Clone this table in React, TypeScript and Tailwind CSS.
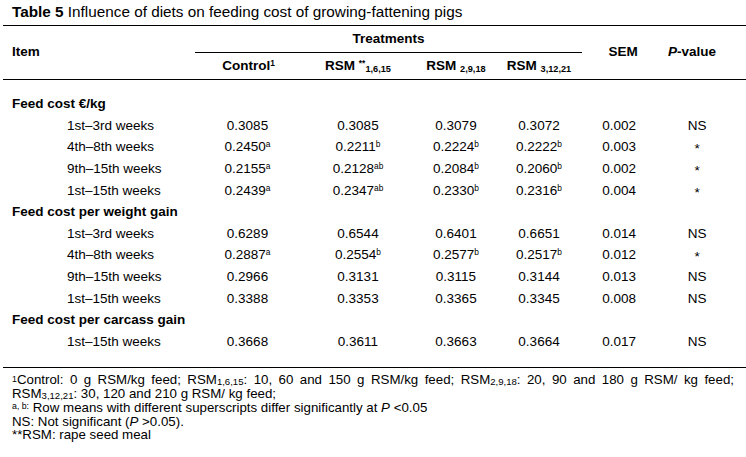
import React from "react";

type Cell = { v: string; s?: string };

type Row =
    | { kind: "group"; label: string }
    | { kind: "data"; label: string; cells: Cell[]; sem: string; p: string };

const c = (v: string, s?: string): Cell => ({ v, s });

const rows: Row[] = [
    { kind: "group", label: "Feed cost €/kg" },
    { kind: "data", label: "1st–3rd weeks", cells: [c("0.3085"), c("0.3085"), c("0.3079"), c("0.3072")], sem: "0.002", p: "NS" },
    { kind: "data", label: "4th–8th weeks", cells: [c("0.2450", "a"), c("0.2211", "b"), c("0.2224", "b"), c("0.2222", "b")], sem: "0.003", p: "*" },
    { kind: "data", label: "9th–15th weeks", cells: [c("0.2155", "a"), c("0.2128", "ab"), c("0.2084", "b"), c("0.2060", "b")], sem: "0.002", p: "*" },
    { kind: "data", label: "1st–15th weeks", cells: [c("0.2439", "a"), c("0.2347", "ab"), c("0.2330", "b"), c("0.2316", "b")], sem: "0.004", p: "*" },
    { kind: "group", label: "Feed cost per weight gain" },
    { kind: "data", label: "1st–3rd weeks", cells: [c("0.6289"), c("0.6544"), c("0.6401"), c("0.6651")], sem: "0.014", p: "NS" },
    { kind: "data", label: "4th–8th weeks", cells: [c("0.2887", "a"), c("0.2554", "b"), c("0.2577", "b"), c("0.2517", "b")], sem: "0.012", p: "*" },
    { kind: "data", label: "9th–15th weeks", cells: [c("0.2966"), c("0.3131"), c("0.3115"), c("0.3144")], sem: "0.013", p: "NS" },
    { kind: "data", label: "1st–15th weeks", cells: [c("0.3388"), c("0.3353"), c("0.3365"), c("0.3345")], sem: "0.008", p: "NS" },
    { kind: "group", label: "Feed cost per carcass gain" },
    { kind: "data", label: "1st–15th weeks", cells: [c("0.3668"), c("0.3611"), c("0.3663"), c("0.3664")], sem: "0.017", p: "NS" },
];

function Sup({ children }: { children: React.ReactNode }) {
    return <span className="relative top-[-0.5em] text-[0.62em] leading-none">{children}</span>;
}

function Sub({ children }: { children: React.ReactNode }) {
    return <span className="relative top-[0.28em] text-[0.68em] leading-none">{children}</span>;
}

// footnote variants sit closer to the line so they don't collide with neighbours
function NoteSup({ children }: { children: React.ReactNode }) {
    return <span className="relative top-[-0.3em] text-[0.66em] leading-none">{children}</span>;
}

function NoteSub({ children }: { children: React.ReactNode }) {
    return <span className="relative top-[0.1em] text-[0.72em] leading-none">{children}</span>;
}

export default function App() {
    return (
        <div className="w-[746px] h-[457px] bg-white text-black font-['Liberation_Sans',Arial,sans-serif] overflow-hidden">
            <div className="pl-[12px] pt-[3px] h-[25px] text-[15.3px] leading-[18px]">
                <span className="font-bold">Table 5</span> Influence of diets on feeding cost of growing-fattening pigs
            </div>

            <table className="ml-[3px] w-[743px] table-fixed border-collapse text-[13.5px]">
                <colgroup>
                    <col className="w-[192px]" />
                    <col className="w-[105px]" />
                    <col className="w-[116px]" />
                    <col className="w-[80px]" />
                    <col className="w-[86px]" />
                    <col className="w-[74px]" />
                    <col className="w-[90px]" />
                </colgroup>
                <thead className="font-bold">
                    <tr className="h-[27px] border-t border-black">
                        <th rowSpan={2} className="text-left pl-[9px] align-middle border-b border-black">
                            Item
                        </th>
                        <th colSpan={4} className="text-center align-middle border-b border-black">
                            Treatments
                        </th>
                        <th rowSpan={2} className="text-center align-middle border-b border-black pl-[8px]">
                            SEM
                        </th>
                        <th rowSpan={2} className="text-center align-middle border-b border-black pr-[18px]">
                            <span className="italic">P</span>-value
                        </th>
                    </tr>
                    <tr className="h-[27px] border-b border-black">
                        <th className="text-center pl-[2px]">
                            Control<Sup>1</Sup>
                        </th>
                        <th className="text-center">
                            RSM <Sup>**</Sup>
                            <Sub>1,6,15</Sub>
                        </th>
                        <th className="text-center">
                            RSM <Sub>2,9,18</Sub>
                        </th>
                        <th className="text-center">
                            RSM <Sub>3,12,21</Sub>
                        </th>
                    </tr>
                </thead>
                <tbody>
                    <tr className="h-[14px]">
                        <td colSpan={7} />
                    </tr>
                    {rows.map((r, i) =>
                        r.kind === "group" ? (
                            <tr key={i} className="h-[21.6px]">
                                <td colSpan={7} className="pl-[9px] font-bold leading-[16px]">
                                    {r.label}
                                </td>
                            </tr>
                        ) : (
                            <tr key={i} className="h-[21.6px] leading-[16px]">
                                <td className="pl-[64px]">{r.label}</td>
                                {r.cells.map((cell, j) => (
                                    <td key={j} className="text-center">
                                        {cell.v}
                                        {cell.s && <Sup>{cell.s}</Sup>}
                                    </td>
                                ))}
                                <td className="text-center">{r.sem}</td>
                                <td className="text-center pr-[8px]">
                                    {r.p === "*" ? <span className="relative top-[2px]">*</span> : r.p}
                                </td>
                            </tr>
                        )
                    )}
                    <tr className="h-[15px] border-b border-black">
                        <td colSpan={7} />
                    </tr>
                </tbody>
            </table>

            <div className="pl-[12px] pt-[5px] w-[734px] text-[13.3px] leading-[13.8px]">
                <div className="text-justify [text-align-last:justify]">
                    <NoteSup>1</NoteSup>Control: 0 g RSM/kg feed; RSM<NoteSub>1,6,15</NoteSub>: 10, 60 and 150 g RSM/kg feed;
                    RSM<NoteSub>2,9,18</NoteSub>: 20, 90 and 180 g RSM/ kg feed;
                </div>
                <div>
                    RSM<NoteSub>3,12,21</NoteSub>: 30, 120 and 210 g RSM/ kg feed;
                </div>
                <div>
                    <NoteSup>a, b:</NoteSup> Row means with different superscripts differ significantly at{" "}
                    <span className="italic">P</span> &lt;0.05
                </div>
                <div>
                    NS: Not significant (<span className="italic">P</span> &gt;0.05).
                </div>
                <div>**RSM: rape seed meal</div>
            </div>
        </div>
    );
}
